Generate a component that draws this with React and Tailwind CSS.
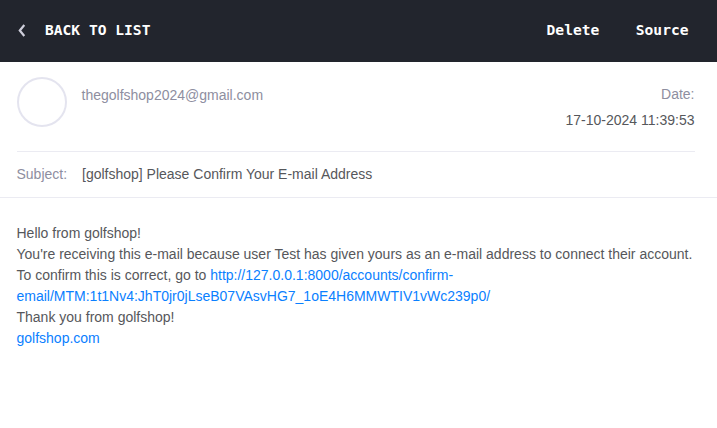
export default function App() {
  return (
    <div className="w-[717px] h-[428px] overflow-hidden bg-white font-['Liberation_Sans',Arial,sans-serif] text-[14px] leading-[21px] text-[#56575b]">
      <header className="flex h-[62px] items-center bg-[#22252d] pb-[3px] pl-[17px] pr-[28.5px] font-['DejaVu_Sans_Mono',monospace] text-[14.6px] font-bold text-white">
        <svg className="mr-[18px] h-[14px] w-[10px]" viewBox="0 0 10 14" fill="none" stroke="#cfcfdb" strokeWidth="2.2">
          <path d="M7.3 2 2.8 7.5l4.5 5.5" />
        </svg>
        <span className="w-[106px] whitespace-nowrap">BACK TO LIST</span>
        <span className="ml-auto">Delete</span>
        <span className="ml-[36.5px]">Source</span>
      </header>
      <section className="ml-[17px] mr-[22px] flex h-[90px] border-b border-[#ebebf2] pt-[15px]">
        <div className="h-[50px] w-[50px] rounded-full border-2 border-[#e4e4ef]" />
        <div className="ml-[14.5px] mt-[8px] text-[#8e8ea0]">thegolfshop2024@gmail.com</div>
        <div className="ml-auto mr-[0.5px] mt-[4px] text-right leading-[26px]">
          <div className="text-[#8e8ea0]">Date:</div>
          <div>17-10-2024 11:39:53</div>
        </div>
      </section>
      <section className="flex h-[46px] items-center border-b border-[#ebebf2] pl-[16.5px]">
        <span className="w-[65.5px] text-[#8e8ea0]">Subject:</span>
        <span>[golfshop] Please Confirm Your E-mail Address</span>
      </section>
      <main className="whitespace-nowrap pl-[16.5px] pt-[25px]">
        <div>Hello from golfshop!</div>
        <div>You're receiving this e-mail because user Test has given yours as an e-mail address to connect their account.</div>
        <div>To confirm this is correct, go to <a className="text-[#0a80ff]">http://127.0.0.1:8000/accounts/confirm-<br />email/MTM:1t1Nv4:JhT0jr0jLseB07VAsvHG7_1oE4H6MMWTIV1vWc239p0/</a></div>
        <div>Thank you from golfshop!</div>
        <a className="text-[#0a80ff]">golfshop.com</a>
      </main>
    </div>
  );
}
